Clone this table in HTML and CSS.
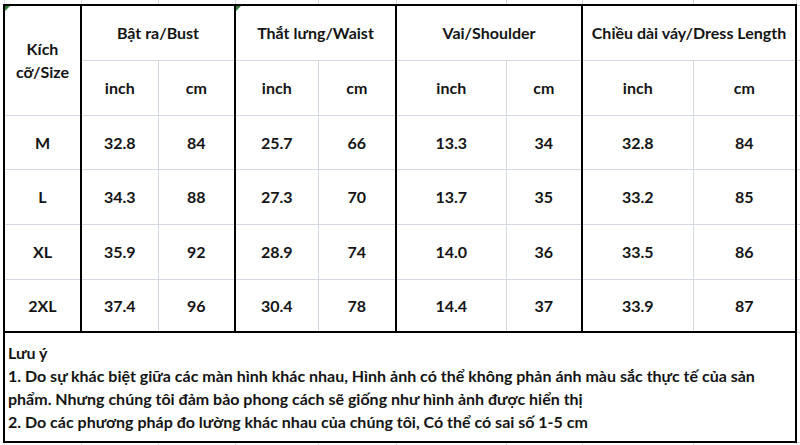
FILE: index.html
```html
<!DOCTYPE html>
<html lang="vi">
<head>
<meta charset="utf-8">
<title>Bảng kích cỡ</title>
<link rel="stylesheet" href="styles.css">
</head>
<body>
<table class="sheet">
  <colgroup>
    <col class="c-size">
    <col class="c-bi"><col class="c-bc">
    <col class="c-wi"><col class="c-wc">
    <col class="c-si"><col class="c-sc">
    <col class="c-di"><col class="c-dc">
    <col class="c-extra">
  </colgroup>
  <tr class="r-top">
    <td></td><td></td><td></td><td></td><td></td><td></td><td></td><td></td><td></td><td class="extra"></td>
  </tr>
  <tr class="r-h">
    <td rowspan="2" class="t bl br flag">Kích<br>cỡ/Size</td>
    <td colspan="2" class="t br">Bật ra/Bust</td>
    <td colspan="2" class="t br flag">Thắt lưng/Waist</td>
    <td colspan="2" class="t br">Vai/Shoulder</td>
    <td colspan="2" class="t br">Chiều dài váy/Dress Length</td>
    <td class="extra"></td>
  </tr>
  <tr class="r-h">
    <td>inch</td><td class="br">cm</td>
    <td>inch</td><td class="br">cm</td>
    <td>inch</td><td class="br">cm</td>
    <td>inch</td><td class="br">cm</td>
    <td class="extra"></td>
  </tr>
  <tr class="r-m">
    <td class="bl br">M</td>
    <td>32.8</td><td class="br">84</td>
    <td>25.7</td><td class="br">66</td>
    <td>13.3</td><td class="br">34</td>
    <td>32.8</td><td class="br">84</td>
    <td class="extra"></td>
  </tr>
  <tr class="r-d">
    <td class="bl br">L</td>
    <td>34.3</td><td class="br">88</td>
    <td>27.3</td><td class="br">70</td>
    <td>13.7</td><td class="br">35</td>
    <td>33.2</td><td class="br">85</td>
    <td class="extra"></td>
  </tr>
  <tr class="r-d">
    <td class="bl br">XL</td>
    <td>35.9</td><td class="br">92</td>
    <td>28.9</td><td class="br">74</td>
    <td>14.0</td><td class="br">36</td>
    <td>33.5</td><td class="br">86</td>
    <td class="extra"></td>
  </tr>
  <tr class="r-last">
    <td class="bl br bb">2XL</td>
    <td class="bb">37.4</td><td class="br bb">96</td>
    <td class="bb">30.4</td><td class="br bb">78</td>
    <td class="bb">14.4</td><td class="br bb">37</td>
    <td class="bb">33.9</td><td class="br bb">87</td>
    <td class="extra"></td>
  </tr>
  <tr class="r-notes">
    <td colspan="9" class="notes">
      <div class="line">Lưu ý</div>
      <div class="line">1. Do sự khác biệt giữa các màn hình khác nhau, Hình ảnh có thể không phản ánh màu sắc thực tế của sản</div>
      <div class="line">phẩm. Nhưng chúng tôi đảm bảo phong cách sẽ giống như hình ảnh được hiển thị</div>
      <div class="line">2. Do các phương pháp đo lường khác nhau của chúng tôi, Có thể có sai số 1-5 cm</div>
    </td>
    <td class="extra"></td>
  </tr>
  <tr class="r-bottom">
    <td></td><td></td><td></td><td></td><td></td><td></td><td></td><td></td><td></td><td class="extra"></td>
  </tr>
</table>
</body>
</html>
```
FILE: styles.css
```css
html, body {
  margin: 0;
  padding: 0;
  background: #ffffff;
}

body {
  font-family: Lato, "Liberation Sans", sans-serif;
  font-weight: 700;
  color: #141414;
}

.sheet {
  border-collapse: collapse;
  table-layout: fixed;
  width: 797px;
  margin-left: 3px;
}

.c-size { width: 77px; }
.c-bi { width: 77px; }
.c-bc { width: 77px; }
.c-wi { width: 83px; }
.c-wc { width: 78px; }
.c-si { width: 110px; }
.c-sc { width: 76px; }
.c-di { width: 111px; }
.c-dc { width: 103px; }
.c-extra { width: 5px; }

.sheet td {
  border: 1px solid #d5d9e4;
  padding: 0;
  text-align: center;
  vertical-align: middle;
  font-size: 16px;
  line-height: 23px;
  position: relative;
}

.r-top td { border-top: none; }
.r-bottom td { border-bottom: none; }
.sheet td.extra { border-right: none; }

.r-top { height: 5px; }
.r-h { height: 55px; }
.r-m { height: 54px; }
.r-d { height: 55px; }
.r-last { height: 53px; }
.r-notes { height: 110px; }
.r-bottom { height: 3px; }

.sheet td.t { border-top: 2px solid #000; }
.sheet td.bl { border-left: 2px solid #000; }
.sheet td.br { border-right: 2px solid #000; }
.sheet td.bb { border-bottom: 2px solid #000; }

.sheet td.notes {
  border: 2px solid #000;
  text-align: left;
  padding-left: 3px;
}

.line {
  white-space: nowrap;
  line-height: 23px;
}

.flag::before {
  content: "";
  position: absolute;
  left: 0;
  top: 0;
  width: 0;
  height: 0;
  border-top: 5px solid #2f7d32;
  border-right: 5px solid transparent;
}
```
